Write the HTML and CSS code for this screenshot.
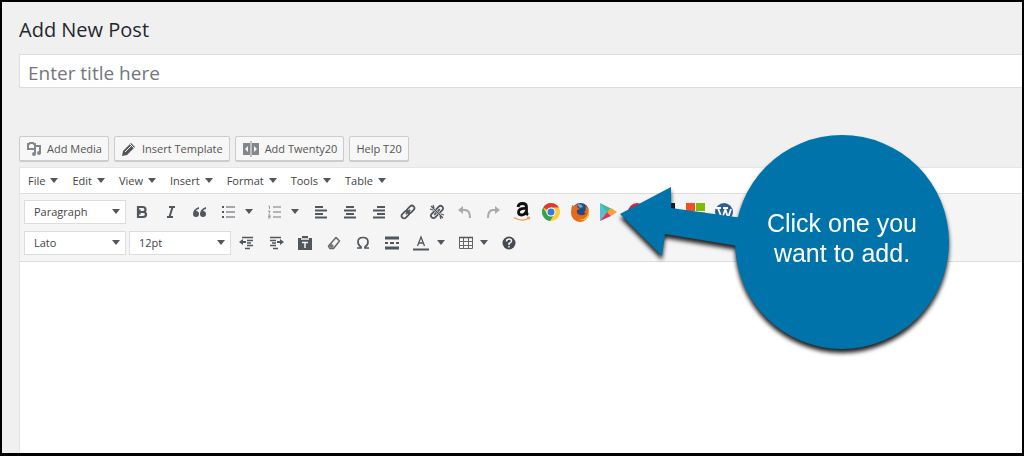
FILE: index.html
```html
<!DOCTYPE html>
<html lang="en">
<head>
    <meta charset="UTF-8">
    <meta name="viewport" content="width=device-width, initial-scale=1.0">
    <title>Add New Post</title>
    <link rel="stylesheet" href="styles.css">
</head>
<body>
    <main class="page">
        <h1>Add New Post</h1>
        <input class="title-input" type="text" placeholder="Enter title here" aria-label="Post title">

        <div class="media-buttons">
            <button class="media-button">
                <svg width="16" height="16" viewBox="0 0 16 16" fill="none" stroke="#82878c" stroke-width="2"><path d="M2 3h1l1-1h3l1 1h1v5H2z"/><path d="M10 5h4v7M9 7v6"/><circle cx="8" cy="13" r="1"/><circle cx="13" cy="12" r="1"/></svg>
                Add Media
            </button>
            <button class="media-button">
                <svg width="16" height="16" viewBox="0 0 16 16"><path d="M10 2l4 4-8 8-5 1 1-5z" fill="#555"/><path d="M4 11l6-6M9 3l4 4" stroke="#f7f7f7"/></svg>
                Insert Template
            </button>
            <button class="media-button">
                <svg width="18" height="16" viewBox="0 0 18 16"><path d="M1 2h7v12H1zM10 2h7v12h-7zM8.500 0h1v16h-1z" fill="#82878c"/><path d="M6 5v6L3 8zM12 5v6l3-3z" fill="#f7f7f7"/></svg>
                Add Twenty20
            </button>
            <button class="media-button">Help T20</button>
        </div>

        <div class="editor">
            <div class="menubar">
                <button>File</button>
                <button>Edit</button>
                <button>View</button>
                <button>Insert</button>
                <button>Format</button>
                <button>Tools</button>
                <button>Table</button>
            </div>
            <div class="toolbar">
                <div class="row">
                    <select aria-label="Block format"><option>Paragraph</option></select>
                    <button class="tool" aria-label="Bold"><svg viewBox="0 0 16 16"><path d="M4 3h4.500q3 0 3 2.500t-2.500 2.500q3 0 3 2.500T9 13H4zM5.500 5.500v5" fill="none" stroke="#50575e" stroke-width="2.200"/><path d="M5 8h4" stroke="#50575e" stroke-width="2"/></svg></button>
                    <button class="tool" aria-label="Italic"><svg viewBox="0 0 16 16"><path d="M6 3h6M4 13h6M9.500 3l-3 10" fill="none" stroke="#50575e" stroke-width="2"/></svg></button>
                    <button class="tool" aria-label="Quote"><svg viewBox="0 0 16 16" fill="#50575e"><path d="M7 3Q1 5 1 10a3 3 0 1 0 3-3q1-2 3-2zM14 3Q8 5 8 10a3 3 0 1 0 3-3q1-2 3-2z"/></svg></button>
                    <button class="tool split" aria-label="Bulleted list"><svg viewBox="0 0 16 16"><path d="M5 3h9M5 8h9M5 13h9" stroke="#50575e"/><path d="M1 3h2M1 8h2M1 13h2" stroke="#50575e" stroke-width="2"/></svg></button>
                    <button class="tool split" aria-label="Numbered list"><svg viewBox="0 0 16 16"><path d="M6 3h8M6 8h8M6 13h8" stroke="#777"/><path d="M1.500 2h1v3M1 7h2l-1 2h1M1 11h2v3H1M1 12.500h2" fill="none" stroke="#999"/></svg></button>
                    <button class="tool" aria-label="Align left"><svg viewBox="0 0 16 16"><path d="M2 3h8M2 6.500h12M2 10h8M2 13.500h12" stroke="#50575e" stroke-width="1.800"/></svg></button>
                    <button class="tool" aria-label="Align center"><svg viewBox="0 0 16 16"><path d="M4 3h8M2 6.500h12M4 10h8M2 13.500h12" stroke="#50575e" stroke-width="1.800"/></svg></button>
                    <button class="tool" aria-label="Align right"><svg viewBox="0 0 16 16"><path d="M6 3h8M2 6.500h12M6 10h8M2 13.500h12" stroke="#50575e" stroke-width="1.800"/></svg></button>
                    <button class="tool" aria-label="Insert link"><svg viewBox="0 0 16 16"><g transform="rotate(-45 8 8)" fill="none" stroke="#50575e" stroke-width="1.800"><rect x="0" y="5.500" width="8.500" height="5" rx="2.500"/><rect x="7.500" y="5.500" width="8.500" height="5" rx="2.500"/><path d="M5 8h6"/></g></svg></button>
                    <button class="tool" aria-label="Remove link"><svg viewBox="0 0 16 16"><g transform="rotate(-45 8 8)" fill="none" stroke="#50575e" stroke-width="1.800"><path d="M7 5.500H3a2.500 2.500 0 0 0 0 5h4M9 5.500h4a2.500 2.500 0 0 1 0 5H9M4 8h3M9 8h3"/></g><path d="M1 5l3 1M4 1l1 3M15 11l-3-1M12 15l-1-3M2 2l12 12" stroke="#50575e" stroke-width="1.200"/></svg></button>
                    <button class="tool history" aria-label="Undo" disabled><svg viewBox="0 0 16 16"><path d="M1 6l5-4v8z" fill="#aaa"/><path d="M4 6h4q5 0 5 8" fill="none" stroke="#aaa" stroke-width="2"/></svg></button>
                    <button class="tool history" aria-label="Redo" disabled><svg viewBox="0 0 16 16"><path d="M15 6l-5-4v8z" fill="#aaa"/><path d="M12 6H8q-5 0-5 8" fill="none" stroke="#aaa" stroke-width="2"/></svg></button>
                    <button class="tool brand" aria-label="Amazon"><svg viewBox="0 0 20 20"><path d="M6 5q.5-3.500 4.500-3.500T14.500 5v5q0 2 1.500 3M14.500 6.500Q6.500 6 6.500 10q0 3 3 3 3.500 0 5-4" fill="none" stroke="#111" stroke-width="2.800"/><path d="M2 15.500q8 5 15 .5M15 15.500h2.500l-.5 2" fill="none" stroke="#f0a04b" stroke-width="1.300"/></svg></button>
                    <button class="tool brand" aria-label="Chrome"><svg viewBox="0 0 20 20"><circle cx="10" cy="10" r="9" fill="#fc3"/><path d="M10 10L2.200 5.500A9 9 0 0 1 17.800 5.500H10z" fill="#dc3b31"/><path d="M2.200 5.500A9 9 0 0 0 9 19l4.500-7-3.500 2-4-2z" fill="#37a352"/><circle cx="10" cy="10" r="4.500" fill="#fff"/><circle cx="10" cy="10" r="3.500" fill="#2f7de1"/></svg></button>
                    <button class="tool brand" aria-label="Firefox"><svg viewBox="0 0 20 20"><circle cx="10.500" cy="9.500" r="8.500" fill="#234a86"/><path d="M8 2q4 0 5 3l-3 1-2-2z" fill="#65a7d8"/><path d="M2 3q1 1 3 1 2-2 3-2L7 5l3 2-3 1q-1 4 3 5 4 1 6-2l-2 0q3-4 1-8 4 3 4 8a9 9 0 0 1-18 0q0-4 1-7z" fill="#e66a18"/><path d="M17 4q3 8-2 12-3 2-7 1 9 4 11-5 0-5-2-8z" fill="#fbbf2e"/></svg></button>
                    <button class="tool brand" aria-label="Google Play"><svg viewBox="0 0 20 20"><path d="M1 1l7 9-7 9z" fill="#4fc1d8"/><path d="M1 1l12 6-5 4z" fill="#3dbb94"/><path d="M12 6l6 4-6 4-4-4z" fill="#f9a13c"/><path d="M1 19l7-9 4 4z" fill="#d93658"/></svg></button>
                    <button class="tool brand" aria-label="Opera"><svg viewBox="0 0 20 20"><ellipse cx="9" cy="10" rx="7" ry="7" fill="none" stroke="#d9283a" stroke-width="4"/></svg></button>
                    <button class="tool brand" aria-label="Windows Store"><svg viewBox="0 0 20 20"><path d="M0 1h18v18H0z" fill="#111a2b"/></svg></button>
                    <button class="tool brand" aria-label="Microsoft"><svg viewBox="0 0 20 20"><path d="M0 1h9v8H0z" fill="#f25022"/><path d="M10 1h9v8h-9z" fill="#80bc06"/><path d="M0 10h9v9H0z" fill="#05a6f0"/><path d="M10 10h9v9h-9z" fill="#ffba08"/></svg></button>
                    <button class="tool brand" aria-label="WordPress"><svg viewBox="0 0 20 20"><circle cx="9" cy="10" r="9" fill="#2b5f9b"/><path d="M1 6h5M8 6h5M3 6l4 11 3-9M10 6l3 10 3-9" fill="none" stroke="#fff" stroke-width="1.800"/></svg></button>
                </div>
                <div class="row">
                    <select aria-label="Font family"><option>Lato</option></select>
                    <select aria-label="Font size"><option>12pt</option></select>
                    <button class="tool" aria-label="Decrease indent"><svg viewBox="0 0 16 16"><path d="M3 2.500h11M8 5.500h6M8 8h4M8 10.500h6M6 13.500h5" stroke="#50575e" stroke-width="1.500"/><path d="M0 7l4-3v2h3v2H4v2z" fill="#50575e"/></svg></button>
                    <button class="tool" aria-label="Increase indent"><svg viewBox="0 0 16 16"><path d="M2 2.500h11M2 5.500h6M4 8h4M2 10.500h6M5 13.500h5" stroke="#50575e" stroke-width="1.500"/><path d="M16 7l-4-3v2H9v2h3v2z" fill="#50575e"/></svg></button>
                    <button class="tool" aria-label="Paste as text"><svg viewBox="0 0 16 16"><path d="M1 3h4V1h6v2h4v12H1z" fill="#50575e"/><path d="M4 4h8M5 7.500h6M8 7v6" stroke="#f5f5f5" stroke-width="1.500"/></svg></button>
                    <button class="tool" aria-label="Clear formatting"><svg viewBox="0 0 16 16"><path d="M10 2.500l3.500 3.500-6 7.500H4L2.500 11z" fill="none" stroke="#666" stroke-width="1.500" stroke-linejoin="round"/><path d="M3 11l3 2.500 2-2.500-3-3z" fill="#777"/></svg></button>
                    <button class="tool" aria-label="Special character"><svg viewBox="0 0 16 16"><path d="M2 13h4v-1Q3 10 3 7q0-4.500 5-4.500T13 7q0 3-3 5v1h4" fill="none" stroke="#50575e" stroke-width="1.700"/></svg></button>
                    <button class="tool" aria-label="Read more"><svg viewBox="0 0 16 16"><path d="M1 3h14M1 13h14" stroke="#50575e" stroke-width="3"/><path d="M1 8h3M6 8h4M12 8h3" stroke="#50575e" stroke-width="2"/></svg></button>
                    <button class="tool split" aria-label="Text color"><svg viewBox="0 0 16 16"><path d="M4.500 11L8 2l3.500 9M6 8h4" fill="none" stroke="#50575e" stroke-width="1.300"/><path d="M0 14.500h16" stroke="#50575e" stroke-width="2"/></svg></button>
                    <button class="tool split table" aria-label="Table"><svg viewBox="0 0 16 16"><path d="M1.500 2.500h13v11h-13zM1.500 6.500h13M1.500 10.500h13M5.500 2.500v11M10.500 2.500v11" fill="none" stroke="#666"/><path d="M1 2.500h14" stroke="#555" stroke-width="1.500"/></svg></button>
                    <button class="tool" aria-label="Help"><svg viewBox="0 0 16 16"><circle cx="8" cy="8" r="6.500" fill="#444b52"/><path d="M5.500 6.500Q5.500 4 8 4t2.500 2Q10.500 7.500 8 8.500V10M8 11v1.500" fill="none" stroke="#f5f5f5" stroke-width="1.500"/></svg></button>
                </div>
            </div>
            <div class="content" contenteditable="true" role="textbox" aria-label="Post content"></div>
        </div>

        <div class="callout">
            <svg class="arrow" width="130" height="70" viewBox="0 0 130 70"><path d="M0 27L51 0v21l79 11v29L45 47l-3 22z" fill="#0073aa"/></svg>
            <p>Click one you<br>want to add.</p>
        </div>
    </main>
</body>
</html>
```

FILE: styles.css
```css
* {
    box-sizing: border-box;
}
body {
    margin: 0;
    font-family: "Open Sans", "Segoe UI", sans-serif;
    color: #444;
}
button, input, select {
    font-family: inherit;
    color: inherit;
}
.page {
    position: relative;
    display: flex;
    flex-direction: column;
    min-height: 100vh;
    overflow: hidden;
    padding: 14px 0 0 17px;
    background-color: #f0f0f0;
    border: 2px solid #000;
    border-bottom-width: 3px;
}
h1 {
    margin: 0;
    font-size: 20px;
    font-weight: 400;
    line-height: 28px;
    color: #23282d;
}
.title-input {
    width: 100%;
    height: 34px;
    margin-top: 10px;
    padding: 3px 8px 0;
    font-size: 19px;
    background-color: #fff;
    border: 1px solid #ddd;
    border-right: none;
}
.title-input::placeholder {
    color: #72777c;
}
.media-buttons {
    display: flex;
    gap: 5px;
    margin: 48px 0 6px;
}
.media-button {
    display: flex;
    align-items: center;
    gap: 5px;
    height: 25px;
    padding: 0 6px;
    font-size: 11px;
    color: #555;
    background-color: #f7f7f7;
    border: 1px solid #ccc;
    border-radius: 2px;
    box-shadow: 0 1px 0 #ccc;
}
.editor {
    flex: 1;
    display: flex;
    flex-direction: column;
    border: 1px solid #e5e5e5;
    border-right: none;
    border-bottom: none;
}
.menubar {
    display: flex;
    height: 25px;
    background-color: #fff;
}
.menubar button {
    display: flex;
    align-items: center;
    gap: 5px;
    padding: 0 6px 0 8px;
    font-size: 11px;
    background: none;
    border: none;
}
.menubar button::after,
.split::after {
    content: "";
    border: 4px solid transparent;
    border-top: 5px solid #50575e;
    border-bottom: none;
}
.toolbar {
    padding: 2px 4px 3px;
    background-color: #f5f5f5;
    border-top: 1px solid #ddd;
    border-bottom: 1px solid #ddd;
}
.row {
    display: flex;
    align-items: center;
    height: 31px;
}
select {
    appearance: none;
    width: 102px;
    height: 24px;
    margin-right: 1px;
    padding: 0 9px;
    font-size: 11px;
    background: #fff url("data:image/svg+xml,%3Csvg xmlns='http://www.w3.org/2000/svg' width='8' height='5'%3E%3Cpath d='M0 0h8L4 5z' fill='%2350575e'/%3E%3C/svg%3E") no-repeat right 5px center;
    border: 1px solid #ddd;
    border-radius: 0;
}
select + select {
    margin-left: 2px;
}
.tool {
    display: flex;
    align-items: center;
    justify-content: center;
    width: 29px;
    height: 28px;
    padding: 0;
    background: none;
    border: none;
}
.tool svg {
    width: 16px;
    height: 16px;
}
.brand svg {
    width: 20px;
    height: 20px;
}
.history {
    width: 28px;
}
.split {
    gap: 8px;
    width: 46px;
}
.table {
    gap: 6px;
    width: 42px;
}
.content {
    flex: 1;
    background-color: #fff;
}
.callout {
    position: absolute;
    top: 133px;
    left: 733px;
    display: flex;
    align-items: center;
    justify-content: center;
    width: 214px;
    height: 214px;
    padding-bottom: 8px;
    background-color: #0073aa;
    border-radius: 50%;
    filter: drop-shadow(0 4px 2px #222);
}
.arrow {
    position: absolute;
    top: 52px;
    left: -115px;
}
.callout p {
    position: relative;
    margin: 0;
    font-family: "Liberation Sans", Arial, sans-serif;
    font-size: 25px;
    line-height: 30px;
    text-align: center;
    color: #fff;
}
```
